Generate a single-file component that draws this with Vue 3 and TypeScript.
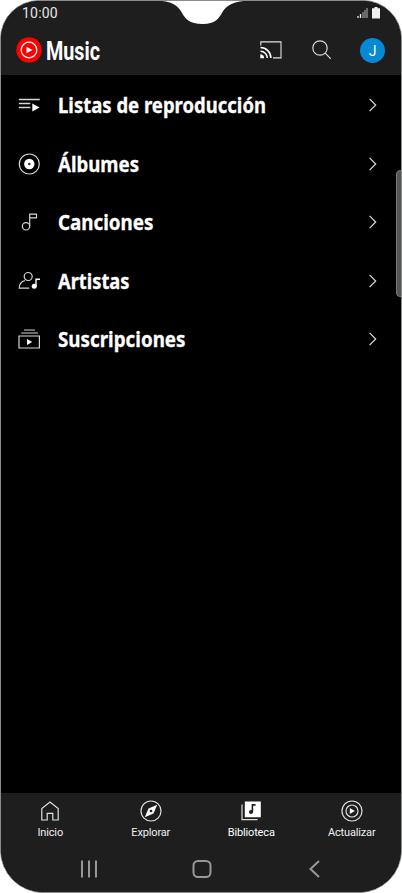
<script setup lang="ts">
interface LibraryEntry {
  id: string
  label: string
  width: number
}

interface Tab {
  id: string
  label: string
  active?: boolean
}

const entries: LibraryEntry[] = [
  { id: 'playlists', label: 'Listas de reproducción', width: 208 },
  { id: 'albums', label: 'Álbumes', width: 81 },
  { id: 'songs', label: 'Canciones', width: 95.5 },
  { id: 'artists', label: 'Artistas', width: 71.5 },
  { id: 'subscriptions', label: 'Suscripciones', width: 127.5 },
]

const tabs: Tab[] = [
  { id: 'home', label: 'Inicio' },
  { id: 'explore', label: 'Explorar' },
  { id: 'library', label: 'Biblioteca', active: true },
  { id: 'upgrade', label: 'Actualizar' },
]
</script>

<template>
  <div class="phone">
    <svg class="notch" width="100" height="25" viewBox="0 0 100 25">
      <path d="M0 0H100V.7C86 .7 77 4.500 72.500 12C69 18.500 65 24 53 24C39 24 35 18.500 31.500 12C27 4.500 20 .7 6 .7H0Z" fill="#fff" />
    </svg>
    <header class="top">
      <div class="status">
        <span class="clock">10:00</span>
        <svg width="26" height="12" viewBox="0 0 26 12">
          <path d="M2 9v2M4.500 7v4" stroke="#eee" stroke-width="1.300" />
          <path d="M7 5v6M9 3v8M11 1v10" stroke="#aaa" stroke-width="1.100" />
          <path d="M18.500 0h3v1.300H24V11.500h-8V1.300h2.500z" fill="#f2f2f2" />
        </svg>
      </div>
      <div class="appbar">
        <div class="brand">
          <svg width="26" height="26" viewBox="0 0 26 26">
            <circle cx="13" cy="13" r="12.700" fill="#f00" />
            <circle cx="13" cy="13" r="7.800" fill="none" stroke="#fff" stroke-width="1.200" />
            <path d="M10.500 9.800L16.500 13l-6 3.200z" fill="#fff" />
          </svg>
          <svg class="wordmark" width="80" height="40" viewBox="0 0 80 40">
            <text x="0" y="29.500" textLength="54" lengthAdjust="spacingAndGlyphs">Music</text>
          </svg>
        </div>
        <div class="actions">
          <svg width="22" height="18" viewBox="0 0 22 18" fill="none" stroke="#e4e4e4">
            <path d="M.8 4.500V.9H21v16H13" stroke-width="1.100" />
            <path d="M.5 6.600A10.400 10.400 0 0 1 10.900 17M.5 10.200A6.800 6.800 0 0 1 7.300 17" stroke="#fff" stroke-width="1.500" />
            <path d="M.3 13.200A3.900 3.900 0 0 1 4.200 17.200H.3z" fill="#fff" stroke="none" />
          </svg>
          <svg class="search" width="20" height="20" viewBox="0 0 20 20" fill="none" stroke="#d8d8d8" stroke-width="1.200">
            <circle cx="8" cy="8" r="7.200" />
            <path d="M13.200 13.200l5.600 5.600" />
          </svg>
          <div class="avatar">J</div>
        </div>
      </div>
    </header>

    <main class="library">
      <div v-for="entry in entries" :key="entry.id" class="entry">
        <svg class="glyph" width="24" height="24" viewBox="0 0 24 24" fill="none" stroke="#d6d6d6" stroke-width="1.200">
          <template v-if="entry.id === 'playlists'">
            <path d="M1.800 6.500h21M1.800 10.500h11.500M1.800 14.500h11.500" stroke-width="1.300" />
            <path d="M15.300 10.500l7.300 4-7.300 4z" fill="#fff" stroke="none" />
          </template>
          <template v-else-if="entry.id === 'albums'">
            <circle cx="12.300" cy="12" r="10" />
            <circle cx="12.300" cy="12" r="3.200" stroke="#fff" stroke-width="4" />
            <circle cx="12.300" cy="12" r=".6" fill="#999" stroke="none" />
          </template>
          <template v-else-if="entry.id === 'songs'">
            <circle cx="9" cy="16.300" r="3.700" />
            <path d="M12.700 16.300V4.200h6.800v3.600h-6.800" />
          </template>
          <template v-else-if="entry.id === 'artists'">
            <circle cx="11.200" cy="7.500" r="4" />
            <path d="M8 11.500C4.200 12.500 2.400 14.800 2.200 19.200h10" />
            <circle cx="17.200" cy="17.300" r="2.500" fill="#fff" stroke="none" />
            <path d="M19 17.200v-7h4" stroke="#fff" stroke-width="1.400" />
          </template>
          <template v-else>
            <path d="M7 3h11M4.300 6H21" />
            <path d="M2 9h20.400v12H2z" />
            <path d="M10 12l5.200 3-5.200 3z" fill="#fff" stroke="none" />
          </template>
        </svg>
        <svg class="label" width="260" height="40" viewBox="0 0 260 40">
          <text x="0" y="27.600" :textLength="entry.width" lengthAdjust="spacingAndGlyphs">{{ entry.label }}</text>
        </svg>
        <svg class="chevron" width="8" height="14" viewBox="0 0 8 14">
          <path d="M.6 .8L6.700 7L.6 13.200" fill="none" stroke="#ddd" stroke-width="1.200" />
        </svg>
      </div>
    </main>

    <footer class="bottom">
      <nav class="tabs">
        <div v-for="tab in tabs" :key="tab.id" class="tab" :class="{ active: tab.active }">
          <svg width="24" height="24" viewBox="0 0 24 24" fill="none" stroke="#e0e0e0" stroke-width="1.200">
            <path v-if="tab.id === 'home'" d="M3.800 21V9.600L12 3l8.200 6.600V21h-5.400v-6.600H9.200V21z" />
            <template v-else-if="tab.id === 'explore'">
              <circle cx="12" cy="12" r="10" />
              <path d="M18.200 5.800l-3.700 8.700-8.700 3.700 3.700-8.700z" fill="#fff" stroke="none" />
              <circle cx="12" cy="12" r="1.300" fill="#1e1e1e" stroke="none" />
            </template>
            <template v-else-if="tab.id === 'library'">
              <path d="M3 5.500v15.200H18.500" />
              <path d="M5.800 2.500h16v15.700h-16z" fill="#fff" stroke="none" />
              <circle cx="12" cy="13" r="2" fill="#1e1e1e" stroke="none" />
              <path d="M13.400 13V5.900h3.200" stroke="#1e1e1e" stroke-width="1.600" />
            </template>
            <template v-else>
              <circle cx="12" cy="12" r="10" />
              <circle cx="12" cy="12" r="6" />
              <path d="M9.800 9l5 3-5 3z" fill="#fff" stroke="none" />
            </template>
          </svg>
          <span>{{ tab.label }}</span>
        </div>
      </nav>
      <div class="system">
        <svg width="18" height="18" viewBox="0 0 18 18">
          <path d="M2 .5v17M9 .5v17M16 .5v17" stroke="#989898" stroke-width="2" />
        </svg>
        <svg width="20" height="18" viewBox="0 0 20 18">
          <rect x="1.500" y="1" width="17" height="16" rx="4.500" fill="none" stroke="#989898" stroke-width="2" />
        </svg>
        <svg width="18" height="18" viewBox="0 0 18 18">
          <path d="M13 1L4.500 9l8.500 8" fill="none" stroke="#989898" stroke-width="2" />
        </svg>
      </div>
    </footer>
    <div class="scroll-thumb"></div>
  </div>
</template>

<style>
body {
  background: #fff;
}
</style>

<style scoped>
.phone {
  position: relative;
  box-sizing: border-box;
  display: flex;
  flex-direction: column;
  width: 402px;
  height: 893px;
  border: 1px solid #8b8d8c;
  border-radius: 39px 39px 43px 43px;
  background: #000;
  overflow: hidden;
  color: #fff;
  font-family: Roboto, "Liberation Sans", sans-serif;
}
svg {
  display: block;
  flex: none;
  overflow: visible;
}
.notch {
  position: absolute;
  top: -1px;
  left: 149px;
}
.top {
  height: 74px;
  flex: none;
  background: #1e1e1e;
}
.status {
  display: flex;
  align-items: center;
  justify-content: space-between;
  height: 24px;
  padding: 0 19px 0 21px;
}
.clock {
  font-size: 14px;
  color: #e4e4e4;
  letter-spacing: 0.2px;
}
.appbar {
  display: flex;
  align-items: center;
  justify-content: space-between;
  height: 50px;
  padding: 0 16px 0 15px;
}
.brand {
  display: flex;
  align-items: center;
  gap: 4px;
}
.wordmark text {
  font: 700 26px Roboto, sans-serif;
  fill: #fff;
}
.actions {
  display: flex;
  align-items: center;
}
.search {
  margin: 0 28px 0 30px;
}
.avatar {
  width: 25px;
  height: 25px;
  border-radius: 50%;
  background: #0688d4;
  font-size: 14px;
  line-height: 26px;
  text-align: center;
}
.library {
  flex: 1;
  padding-top: 1px;
}
.entry {
  display: flex;
  align-items: center;
  height: 58.5px;
  padding: 0 24px 0 16px;
}
.label {
  margin-left: 16.5px;
}
.label text {
  font: 700 21px "Noto Sans", sans-serif;
  fill: #fff;
  stroke: #fff;
  stroke-width: 0.3px;
}
.chevron {
  margin-left: auto;
}
.bottom {
  flex: none;
  height: 99px;
  background: #1e1e1e;
}
.tabs {
  display: flex;
  height: 52px;
  margin: 0 -1px;
}
.tab {
  display: flex;
  flex: 1;
  flex-direction: column;
  align-items: center;
  padding-top: 6px;
  font-size: 11px;
  line-height: 14px;
  letter-spacing: -0.15px;
  color: #f0f0f0;
}
.tab span {
  margin-top: 3px;
}
.tab.active {
  color: #fff;
}
.system {
  display: flex;
  align-items: center;
  justify-content: space-between;
  padding: 15px 77px 0 79px;
}
.scroll-thumb {
  position: absolute;
  top: 169px;
  right: -1px;
  width: 6px;
  height: 127px;
  box-sizing: border-box;
  border: 1px solid #777;
  border-radius: 4px 0 0 4px;
  background: #555;
}
</style>
